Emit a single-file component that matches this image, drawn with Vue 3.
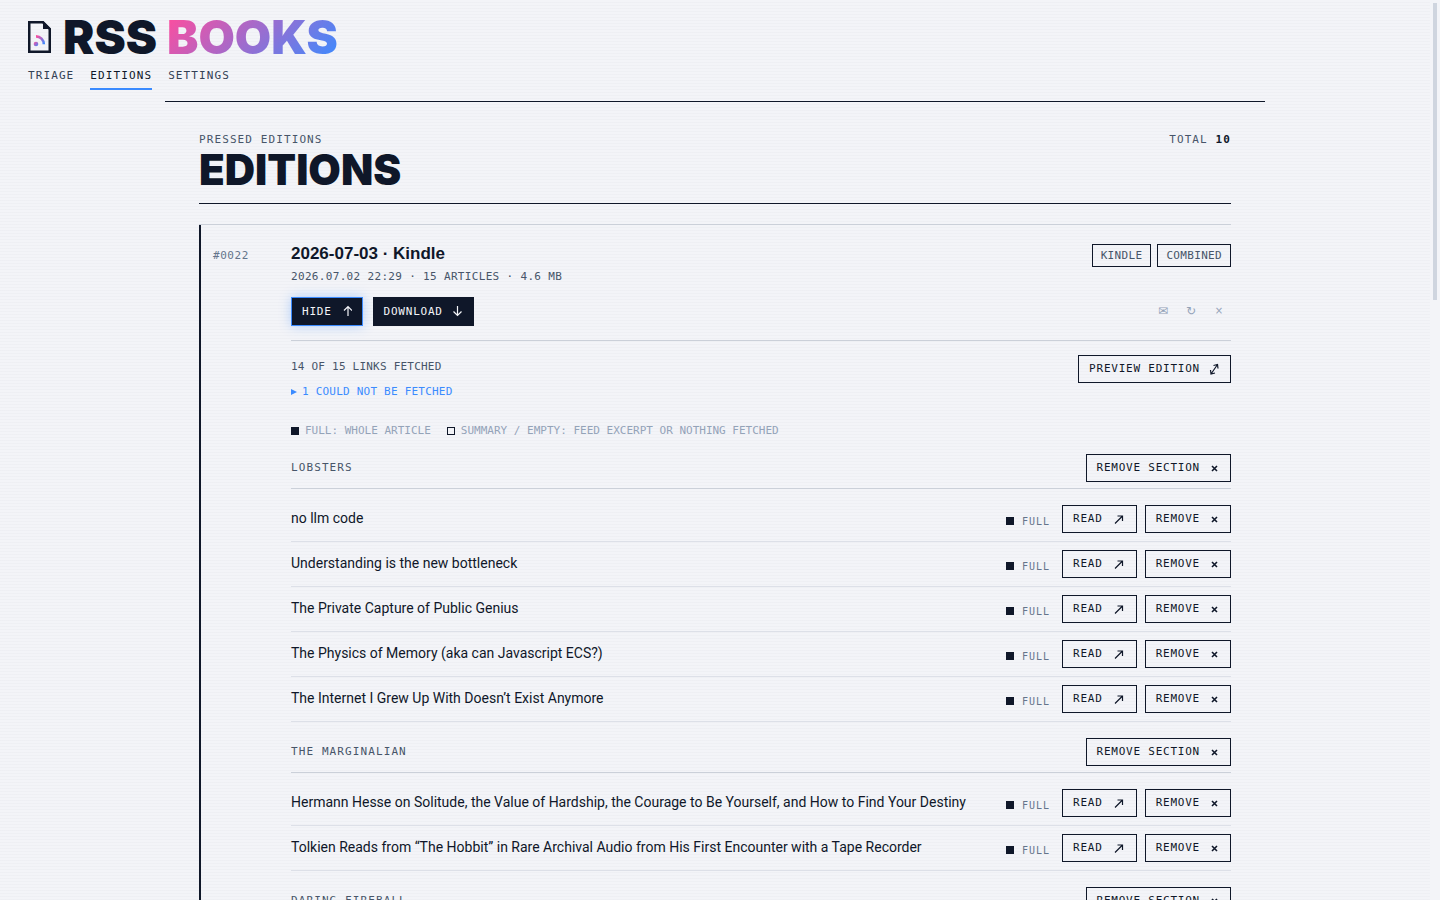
<script setup>
import { ref, reactive } from "vue"

const nav = ["Triage", "Editions", "Settings"]
const current = ref("Editions")
const open = ref(true)

const tags = ["Kindle", "Combined"]

// Feeds and their articles
const sections = reactive([
  {
    name: "Lobsters",
    articles: [
      "no llm code",
      "Understanding is the new bottleneck",
      "The Private Capture of Public Genius",
      "The Physics of Memory (aka can Javascript ECS?)",
      "The Internet I Grew Up With Doesn’t Exist Anymore",
    ],
  },
  {
    name: "The Marginalian",
    articles: [
      "Hermann Hesse on Solitude, the Value of Hardship, the Courage to Be Yourself, and How to Find Your Destiny",
      "Tolkien Reads from “The Hobbit” in Rare Archival Audio from His First Encounter with a Tape Recorder",
    ],
  },
  { name: "Daring Fireball", articles: [] },
])

const removeSection = index => {
  sections.splice(index, 1)
}

const removeArticle = (section, index) => {
  section.articles.splice(index, 1)
}
</script>

<template>
  <div class="shell">
    <div class="page">
      <header class="masthead">
        <h1 class="brand">
          <svg class="brand-icon" viewBox="0 0 23 32" aria-hidden="true">
            <defs>
              <linearGradient id="feed" x1="0" y1="0" x2="1" y2="1">
                <stop offset="0" stop-color="#ff4d9d" />
                <stop offset="1" stop-color="#3b8bff" />
              </linearGradient>
            </defs>
            <path d="M1.25 1.25H15L21.75 8V30.75H1.25Z" fill="none" stroke="#0f1729" stroke-width="2.5" />
            <path d="M15 0L23 8H15Z" fill="#0f1729" />
            <circle cx="8" cy="23" r="2.3" fill="url(#feed)" />
            <path d="M8 15.4A7.8 7.8 0 0 1 15.8 23.2" fill="none" stroke="url(#feed)" stroke-width="2.6" />
          </svg>
          <span>RSS</span>
          <span class="brand-accent">BOOKS</span>
        </h1>
        <nav class="nav">
          <a
            v-for="item in nav"
            :key="item"
            href="#"
            :class="{ active: item === current }"
            @click.prevent="current = item"
          >{{ item }}</a>
        </nav>
      </header>

      <main class="main">
        <div class="heading">
          <div>
            <p class="label">Pressed editions</p>
            <h2>EDITIONS</h2>
          </div>
          <p class="label total">Total <strong>10</strong></p>
        </div>

        <div class="editions">
          <article class="edition">
            <span class="number">#0022</span>
            <div class="body">
              <div class="top">
                <div>
                  <h3>2026-07-03 · Kindle</h3>
                  <p class="meta">2026.07.02 22:29 · 15 articles · 4.6 MB</p>
                </div>
                <div class="tags">
                  <span v-for="tag in tags" :key="tag" class="tag">{{ tag }}</span>
                </div>
              </div>

              <div class="actions">
                <button class="btn solid focused" @click="open = !open">
                  Hide
                  <svg viewBox="0 0 12 12"><path d="M8 11V1.5M4 5.5L8 1.5L12 5.5" /></svg>
                </button>
                <button class="btn solid">
                  Download
                  <svg viewBox="0 0 12 12"><path d="M6.5 1V10.5M2.5 6.5L6.5 10.5L10.5 6.5" /></svg>
                </button>
                <div class="tools">
                  <button aria-label="Send">✉</button>
                  <button aria-label="Rebuild">↻</button>
                  <button aria-label="Delete" class="small">×</button>
                </div>
              </div>

              <div v-if="open" class="contents">
                <div class="report">
                  <div>
                    <p class="fetched">14 of 15 links fetched</p>
                    <button class="failed">
                      <svg viewBox="0 0 6 8"><path d="M0 1L6 4L0 7Z" /></svg>
                      1 could not be fetched
                    </button>
                  </div>
                  <button class="btn">
                    Preview edition
                    <svg viewBox="0 0 12 12"><path d="M3 11L9.5 1.5M5.5 2.5L9.5 1.5L10 5.5M2.5 7L3 11L7 10" /></svg>
                  </button>
                </div>

                <div class="legend">
                  <span><i class="square" />Full: whole article</span>
                  <span><i class="square hollow" />Summary / empty: feed excerpt or nothing fetched</span>
                </div>

                <section v-for="(section, s) in sections" :key="section.name" class="feed">
                  <div class="feed-head">
                    <h4>{{ section.name }}</h4>
                    <button class="btn" @click="removeSection(s)">
                      Remove section
                      <svg viewBox="0 0 12 12"><path class="cross" d="M4 4L9 9M9 4L4 9" /></svg>
                    </button>
                  </div>
                  <ul>
                    <li v-for="(article, a) in section.articles" :key="article">
                      <span class="title">{{ article }}</span>
                      <span class="status"><i class="square" />Full</span>
                      <button class="btn read">
                        Read
                        <svg viewBox="0 0 12 12"><path d="M1 10.5L8.5 3M3.5 3H8.5V8" /></svg>
                      </button>
                      <button class="btn" @click="removeArticle(section, a)">
                        Remove
                        <svg viewBox="0 0 12 12"><path class="cross" d="M4 4L9 9M9 4L4 9" /></svg>
                      </button>
                    </li>
                  </ul>
                </section>
              </div>
            </div>
          </article>
        </div>
      </main>
    </div>
    <div class="scroll-rail"><div class="scroll-thumb" /></div>
  </div>
</template>

<style>
body {
  margin: 0;
  background: #f3f4f8;
}
</style>

<style scoped>
.shell {
  display: grid;
  grid-template-columns: 1fr 10px;
  height: 100vh;
  overflow: hidden;
  color: #0f1729;
  font-family: "DejaVu Sans Mono", monospace;
  font-size: 11px;
}

.page {
  min-width: 0;
  overflow: hidden;
  background: repeating-linear-gradient(to bottom, transparent 0 2px, rgba(15, 23, 42, 0.02) 2px 3px);
}

.scroll-rail {
  padding: 3px;
}

.scroll-thumb {
  height: 33vh;
  background: #cfd5df;
}

h1, h2, h3, h4, p, ul {
  margin: 0;
  padding: 0;
}

button {
  font: inherit;
  color: inherit;
  cursor: pointer;
}

/* Masthead */
.masthead {
  padding: 15px 28px 0;
}

.brand {
  display: flex;
  align-items: center;
  gap: 10px;
  font: 900 47px/44px Inter, sans-serif;
}

.brand-icon {
  width: 23px;
  height: 32px;
  margin-right: 2px;
}

.brand-accent {
  background: linear-gradient(135deg, #ff4d9d, #3b8bff);
  background-clip: text;
  color: transparent;
}

.nav {
  display: flex;
  gap: 16px;
  margin-top: 8px;
}

.nav a {
  padding-bottom: 3px;
  border-bottom: 2px solid transparent;
  color: #334155;
  line-height: 18px;
  letter-spacing: 0.1em;
  text-transform: uppercase;
  text-decoration: none;
}

.nav a.active {
  color: #0f1729;
  border-color: #3b8bff;
}

/* Page heading */
.main {
  max-width: 1032px;
  margin: 11px auto 0;
  padding: 29px 34px 0;
  border-top: 1px solid #0f1729;
}

.heading {
  display: flex;
  justify-content: space-between;
  padding-bottom: 12px;
  border-bottom: 1px solid #0f1729;
}

.label {
  color: #475569;
  line-height: 18px;
  letter-spacing: 0.1em;
  text-transform: uppercase;
}

.total strong {
  color: #0f1729;
}

h2 {
  font: 900 42px/42px Inter, sans-serif;
}

/* Edition */
.editions {
  margin-top: 20px;
  border-top: 1px solid #cbd0d9;
}

.edition {
  display: grid;
  grid-template-columns: 78px 1fr;
  padding: 18px 0 0 12px;
  border-left: 2px solid #0f1729;
}

.number {
  padding-top: 4px;
  color: #64748b;
  line-height: 18px;
  letter-spacing: 0.05em;
}

.body {
  min-width: 0;
}

.top,
.report,
.feed-head {
  display: flex;
  justify-content: space-between;
  align-items: flex-start;
}

h3 {
  font: 700 17px/22px "Liberation Sans", Arial, sans-serif;
}

.meta {
  margin-top: 3px;
  color: #475569;
  line-height: 18px;
  letter-spacing: 0.03em;
  text-transform: uppercase;
}

.tags {
  display: flex;
  gap: 6px;
  margin-top: 1px;
}

.tag {
  padding: 0 8px;
  border: 1px solid #0f1729;
  color: #475569;
  line-height: 21px;
  letter-spacing: 0.03em;
  text-transform: uppercase;
}

.actions {
  display: flex;
  align-items: center;
  gap: 10px;
  padding: 11px 0 14px;
  border-bottom: 1px solid #cbd0d9;
}

.btn {
  display: inline-flex;
  align-items: center;
  gap: 8px;
  height: 28px;
  padding: 0 10px 1px;
  border: 1px solid #0f1729;
  background: transparent;
  letter-spacing: 0.07em;
  text-transform: uppercase;
  white-space: nowrap;
}

.btn svg {
  width: 12px;
  height: 12px;
}

.btn path {
  fill: none;
  stroke: currentColor;
  stroke-width: 1.2;
}

.btn .cross {
  stroke-width: 1.6;
}

.btn.read {
  gap: 11px;
}

.btn.solid {
  height: 29px;
  background: #0f1729;
  color: #f3f4f8;
}

.btn.focused {
  border-color: #3b8bff;
  box-shadow: 0 0 12px rgba(59, 139, 255, 0.35);
}

.tools {
  display: flex;
  margin-left: auto;
  margin-right: -2px;
}

.tools button {
  width: 28px;
  padding: 0 0 2px;
  border: 0;
  background: none;
  color: #94a3b8;
  font: 12px/16px "DejaVu Sans", sans-serif;
}

.tools .small {
  font-size: 10px;
}

/* Contents */
.report {
  padding-top: 14px;
}

.fetched {
  margin-top: 3px;
  color: #475569;
  line-height: 18px;
  letter-spacing: 0.02em;
  text-transform: uppercase;
}

.failed {
  display: flex;
  align-items: center;
  gap: 5px;
  margin-top: 7px;
  padding: 0;
  border: 0;
  background: none;
  color: #3b8bff;
  line-height: 18px;
  letter-spacing: 0.02em;
  text-transform: uppercase;
}

.failed svg {
  width: 6px;
  height: 8px;
  fill: currentColor;
}

.legend {
  display: flex;
  gap: 16px;
  margin-top: 21px;
  color: #94a3b8;
  line-height: 18px;
  text-transform: uppercase;
}

.legend span,
.status {
  display: flex;
  align-items: center;
  gap: 6px;
}

.square {
  box-sizing: border-box;
  width: 8px;
  height: 8px;
  border: 1px solid #0f1729;
  background: #0f1729;
}

.square.hollow {
  background: transparent;
}

.feed {
  margin-top: 16px;
}

.legend + .feed {
  margin-top: 14px;
}

.feed-head {
  padding-bottom: 6px;
  border-bottom: 1px solid #cbd0d9;
}

h4 {
  color: #475569;
  font-size: 11px;
  font-weight: 400;
  line-height: 28px;
  letter-spacing: 0.1em;
  text-transform: uppercase;
}

.feed ul {
  padding-top: 8px;
  list-style: none;
}

.feed li {
  display: flex;
  align-items: center;
  gap: 8px;
  padding: 8px 0;
  border-bottom: 1px solid #dde0e8;
}

.title {
  flex: 1;
  min-width: 0;
  padding-bottom: 2px;
  font: 14px/20px Roboto, sans-serif;
}

.status {
  gap: 8px;
  margin-right: 4px;
  padding-top: 4px;
  color: #64748b;
  font-size: 10px;
  letter-spacing: 0.1em;
  text-transform: uppercase;
}
</style>
